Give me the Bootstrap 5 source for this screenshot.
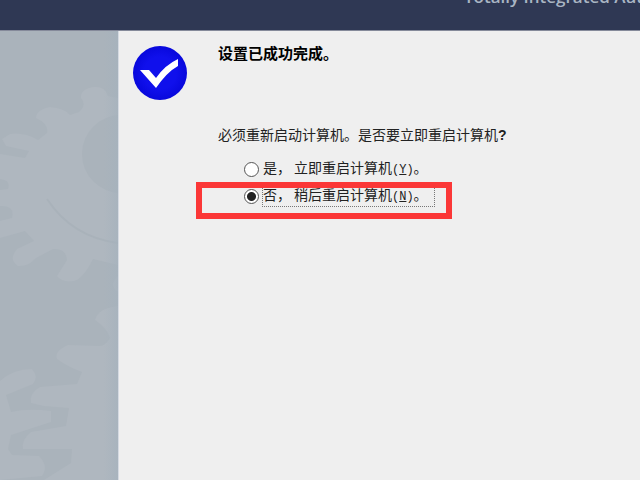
<!DOCTYPE html>
<html lang="zh-CN">
<head>
<meta charset="utf-8">
<meta name="viewport" content="width=device-width, initial-scale=1">
<title>设置已成功完成</title>
<link href="https://cdn.jsdelivr.net/npm/bootstrap@5.3.0/dist/css/bootstrap.min.css" rel="stylesheet">
<style>
body { background: #efefef; color: #222; font: 14px/20px "Liberation Sans", "Noto Sans CJK SC", sans-serif; }
.banner { height: 31px; background: #2f3854; border-bottom: 1px solid #858a9a; padding-left: 464px; }
.product { margin-top: -15px; font: 600 17px/24px "Open Sans", "Noto Sans", sans-serif; color: #a9b5c3; }
.side { width: 119px; background: #aab3bb; border-right: 1px solid #d5dae2; }
.side svg { width: 118px; height: 449px; }
.main-pane { padding: 12px 16px 12px 13px; gap: 30px; }
.status-icon { width: 56px; height: 56px; margin-top: 2px; }
.headline { font-size: 15px; line-height: 22px; font-weight: 700; color: #000; }
.question { margin-top: 60px; }
.choices { margin: 13px 0 0 26px; gap: 5px; }
.choice { gap: 3px; }
.choice input { appearance: none; width: 15px; height: 15px; margin: 0; border: 1px solid #555; border-radius: 50%; background: #fff; }
.choice input:checked { background: radial-gradient(circle, #222 0 4px, #fff 5px); }
.choice label { padding: 0 6px 0 0; border: 1px solid transparent; line-height: 18px; }
.choice input:checked + label { border: 1px dotted #777; }
.choice .comma { margin-right: 3px; }
.key { font: 12px/18px "Liberation Mono", monospace; }
.callout { inset: -3px -17px -12px -48px; border: 6px solid #fb3737; pointer-events: none; }
</style>
</head>
<body class="min-vh-100 d-flex flex-column overflow-hidden">
<header class="banner overflow-hidden flex-shrink-0">
  <div class="product text-nowrap">Totally Integrated Automation</div>
</header>
<div class="d-flex flex-grow-1">
  <aside class="side flex-shrink-0 overflow-hidden" aria-hidden="true">
    <svg class="d-block" viewBox="0 31 118 449">
      <defs><linearGradient id="edge"><stop stop-color="#a5b2bd" stop-opacity="0"/><stop offset="1" stop-color="#a5b2bd" stop-opacity=".7"/></linearGradient></defs>
      <path fill="#afb7bf" d="M118 113V98L108 96Q105 86 94 87Q80 89 81 98Q87 105 79 112L70 115Q64 108 50 107Q36 110 36 118Q49 124 47 133L38 140Q24 132 10 134L2 139L6 146L29 151L25 158L0 154V179Q11 180 8 189L0 190V206Q15 205 12 218L0 221V238L25 231L34 241L17 249Q8 260 18 266Q28 267 36 258L53 249Q66 248 67 260L57 276Q62 283 74 281Q83 279 93 259L118 265Z"/>
      <circle cx="121" cy="154" r="39" fill="#aab3bb"/>
      <path fill="none" stroke="#a9b2ba" stroke-width="2" d="M47 199Q72 237 118 243"/>
      <path fill="#afb7bf" d="M118 276Q108 285 118 292ZM118 306Q98 308 95 320Q107 328 110 338Q105 346 100 346L68 345Q54 351 57 359Q68 367 82 372L77 384L40 387Q29 393 31 403L44 406L69 408L66 426L31 432Q21 440 23 449L72 449L71 463L44 480H118Z"/>
      <path fill="#afb7bf" d="M0 381Q13 369 32 369Q39 377 33 384L6 395L11 412Q28 408 51 411L51 422L11 435L8 449L12 455L39 456Q49 466 42 476L0 480Z"/>
      <path fill="url(#edge)" d="M104 31h14v449h-14z"/>
    </svg>
  </aside>
  <main class="main-pane d-flex flex-grow-1 align-items-start">
    <svg class="status-icon flex-shrink-0" viewBox="0 0 56 56" role="img" aria-label="成功">
      <defs><radialGradient id="disc"><stop offset=".6" stop-color="#1010ec"/><stop offset="1" stop-color="#0808dc"/></radialGradient></defs>
      <circle cx="28" cy="28" r="27" fill="url(#disc)"/>
      <path fill="#fff" d="M8 25H17L24 33Q33 20 46 14V21Q35 27 24 43Z"/>
    </svg>
    <div class="text-nowrap">
      <h1 class="headline mb-0">设置已成功完成。</h1>
      <p class="question mb-0" id="question">必须重新启动计算机。是否要立即重启计算机<b>?</b></p>
      <div class="choices d-flex flex-column align-items-start" role="radiogroup" aria-labelledby="question">
        <div class="choice d-flex align-items-center">
          <input type="radio" name="restart" id="now">
          <label for="now">是<span class="comma">，</span>立即重启计算机<span class="key">(<u>Y</u>)</span>。</label>
        </div>
        <div class="choice d-flex align-items-center position-relative">
          <input type="radio" name="restart" id="later" checked>
          <label for="later">否<span class="comma">，</span>稍后重启计算机<span class="key">(<u>N</u>)</span>。</label>
          <div class="callout position-absolute"></div>
        </div>
      </div>
    </div>
  </main>
</div>
<script src="https://cdn.jsdelivr.net/npm/bootstrap@5.3.0/dist/js/bootstrap.bundle.min.js"></script>
</body>
</html>
